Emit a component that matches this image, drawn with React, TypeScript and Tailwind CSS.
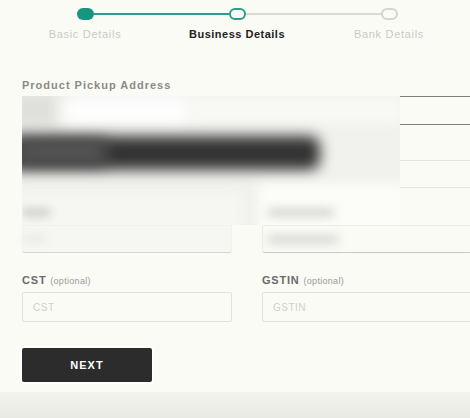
const steps = [
  { label: 'Basic Details', state: 'done' },
  { label: 'Business Details', state: 'current' },
  { label: 'Bank Details', state: 'todo' },
]

function Stepper() {
  return (
    <div className="ml-[9px] grid w-[456px] grid-cols-3 pt-[8px]">
      {steps.map((s, i) => (
        <div key={s.label} className="flex flex-col items-center">
          <div className="flex h-[12px] w-full items-center">
            <div
              className={
                i === 0 ? 'h-[2px] flex-1' : i === 1 ? 'h-[2px] flex-1 bg-[#2a9d8c]' : 'h-[2px] flex-1 bg-[#d9d9d6]'
              }
            />
            {s.state === 'done' && <div className="h-[12px] w-[17px] rounded-full bg-[#16957f]" />}
            {s.state === 'current' && (
              <div className="h-[12px] w-[17px] rounded-full border-2 border-[#2a9d8c] bg-[#fbfbf6]" />
            )}
            {s.state === 'todo' && (
              <div className="h-[12px] w-[17px] rounded-full border-2 border-[#d4d4d1] bg-[#fbfbf6]" />
            )}
            <div
              className={
                i === 0 ? 'h-[2px] flex-1 bg-[#2a9d8c]' : i === 1 ? 'h-[2px] flex-1 bg-[#d9d9d6]' : 'h-[2px] flex-1'
              }
            />
          </div>
          <div
            className={
              s.state === 'current'
                ? 'mt-[7px] text-[11px] leading-[14px] font-bold tracking-[0.5px] text-[#222]'
                : 'mt-[7px] text-[11px] leading-[14px] tracking-[0.7px] text-[#cacac6]'
            }
          >
            {s.label}
          </div>
        </div>
      ))}
    </div>
  )
}

// redacted block: real fields underneath, blurred overlay on top
function Redacted() {
  return (
    <div className="relative h-[157px]">
      <div className="flex w-[450px] flex-col">
        <div className="h-[29px] w-[450px] border border-[#7d7d7d] bg-[#fbfbf6]" />
        <div className="mt-[35px] h-[28px] w-[450px] border border-[#e4e4df] bg-[#fbfbf6]" />
        <div className="mt-[37px] grid grid-cols-[210px_210px] gap-x-[30px]">
          <div className="h-[28px] rounded-[2px] border border-[#f1f1ed] border-b-[#d6d6d1] bg-[#f6f6f2]" />
          <div className="h-[28px] rounded-[3px] border border-[#ececE8] border-b-[#c9c9c4] bg-[#fbfbf6]" />
        </div>
      </div>
      <div className="absolute left-0 top-0 h-[129px] w-[378px] overflow-hidden bg-[#f1f1ed]">
        <div className="absolute left-[-10px] top-[-4px] h-[36px] w-[48px] bg-[#dfdfdb] blur-[8px]" />
        <div className="absolute left-[40px] top-[2px] h-[26px] w-[130px] bg-[#ffffff] blur-[8px]" />
        <div className="absolute left-[170px] top-[0px] h-[28px] w-[210px] bg-[#f8f8f5] blur-[6px]" />
        <div className="absolute left-[-14px] top-[40px] h-[34px] w-[312px] rounded-[10px] bg-[#333333] blur-[7px]" />
        <div className="absolute left-[-6px] top-[44px] h-[24px] w-[90px] bg-[#555555] blur-[8px]" />
        <div className="absolute left-[-10px] top-[98px] h-[40px] w-[230px] bg-[#f6f6f2] blur-[6px]" />
        <div className="absolute left-[0px] top-[112px] h-[9px] w-[28px] bg-[#cfcfcb] blur-[5px]" />
        <div className="absolute left-[236px] top-[88px] h-[50px] w-[150px] bg-[#fcfcf9] blur-[6px]" />
        <div className="absolute left-[246px] top-[112px] h-[9px] w-[66px] bg-[#d6d6d2] blur-[5px]" />
      </div>
      <div className="absolute left-[246px] top-[139px] h-[9px] w-[70px] bg-[#d8d8d4] blur-[5px]" />
      <div className="absolute left-[2px] top-[140px] h-[6px] w-[22px] bg-[#e6e6e2] blur-[4px]" />
    </div>
  )
}

export default function App() {
  return (
    <div className="flex h-[418px] w-[470px] flex-col overflow-hidden bg-[#fbfbf6] font-['Liberation_Sans',Arial,sans-serif]">
      <Stepper />
      <div className="mt-[37px] pl-[22px]">
        <div className="text-[11px] leading-[14px] font-semibold tracking-[1px] text-[#8a8a87]">
          Product Pickup Address
        </div>
        <div className="mt-[4px]">
          <Redacted />
        </div>
        <div className="mt-[20px] grid w-[450px] grid-cols-[210px_210px] gap-x-[30px]">
          <div>
            <div className="text-[11px] leading-[14px] font-semibold tracking-[0.8px] text-[#6b6b68]">
              CST <span className="text-[9px] font-normal tracking-[0.3px] text-[#9a9a97]">(optional)</span>
            </div>
            <div className="mt-[4px] flex h-[30px] items-center rounded-[2px] border border-[#e0e0dc] pl-[10px] text-[10px] tracking-[0.5px] text-[#cfcfcb]">
              CST
            </div>
          </div>
          <div>
            <div className="text-[11px] leading-[14px] font-semibold tracking-[0.8px] text-[#6b6b68]">
              GSTIN <span className="text-[9px] font-normal tracking-[0.3px] text-[#9a9a97]">(optional)</span>
            </div>
            <div className="mt-[4px] flex h-[30px] items-center rounded-[2px] border border-[#e0e0dc] pl-[10px] text-[10px] tracking-[0.5px] text-[#cfcfcb]">
              GSTIN
            </div>
          </div>
        </div>
        <button
          type="button"
          className="mt-[26px] flex h-[34px] w-[130px] items-center justify-center rounded-[2px] bg-[#2c2c2c] text-[11px] font-bold tracking-[1px] text-white shadow-[0_0_0_2px_#ffffff]"
        >
          NEXT
        </button>
      </div>
      <div className="mt-auto h-[26px] bg-gradient-to-b from-[#f3f3ee] to-[#eaeae5]" />
    </div>
  )
}
